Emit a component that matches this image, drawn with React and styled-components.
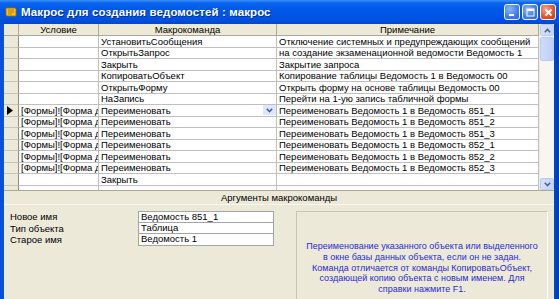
import React from "react";
import styled, { createGlobalStyle } from "styled-components";

const GlobalStyle = createGlobalStyle`
  html, body {
    margin: 0;
    padding: 0;
    overflow: hidden;
    background: #ece9d8;
  }
  body {
    font-family: "Liberation Sans", Arial, sans-serif;
  }
`;

const COND = "[Формы]![Форма д";

const rows = [
  { cond: "", action: "УстановитьСообщения", note: "Отключение системных и предупреждающих сообщений" },
  { cond: "", action: "ОткрытьЗапрос", note: "на создание экзаменационной ведомости Ведомость 1" },
  { cond: "", action: "Закрыть", note: "Закрытие запроса" },
  { cond: "", action: "КопироватьОбъект", note: "Копирование таблицы Ведомость 1 в Ведомость 00" },
  { cond: "", action: "ОткрытьФорму", note: "Открыть форму на основе таблицы Ведомость 00" },
  { cond: "", action: "НаЗапись", note: "Перейти на 1-ую запись табличной формы" },
  { cond: COND, action: "Переименовать", note: "Переименовать Ведомость 1 в Ведомость 851_1", current: true },
  { cond: COND, action: "Переименовать", note: "Переименовать Ведомость 1 в Ведомость 851_2" },
  { cond: COND, action: "Переименовать", note: "Переименовать Ведомость 1 в Ведомость 851_3" },
  { cond: COND, action: "Переименовать", note: "Переименовать Ведомость 1 в Ведомость 852_1" },
  { cond: COND, action: "Переименовать", note: "Переименовать Ведомость 1 в Ведомость 852_2" },
  { cond: COND, action: "Переименовать", note: "Переименовать Ведомость 1 в Ведомость 852_3" },
  { cond: "", action: "Закрыть", note: "" },
  { cond: "", action: "", note: "" },
];

const args = [
  { label: "Новое имя", value: "Ведомость 851_1" },
  { label: "Тип объекта", value: "Таблица" },
  { label: "Старое имя", value: "Ведомость 1" },
];

const helpLines = [
  "Переименование указанного объекта или выделенного",
  "в окне базы данных объекта, если он не задан.",
  "Команда отличается от команды КопироватьОбъект,",
  "создающей копию объекта с новым именем. Для",
  "справки нажмите F1.",
];

const Window = styled.div`
  width: 559px;
  height: 299px;
  display: flex;
  flex-direction: column;
  background: linear-gradient(90deg, #0a4fd6, #0058e6 2%, #0058e6 98%, #003cb0);
  overflow: hidden;
`;

const TitleBar = styled.div`
  height: 24px;
  flex: none;
  display: flex;
  align-items: center;
  padding: 0 3px 0 5px;
  background: linear-gradient(
    #3d8ef5 0%,
    #0a66f0 12%,
    #0058e6 40%,
    #0054e3 75%,
    #0048d0 100%
  );
`;

const Title = styled.div`
  margin-left: 4px;
  color: #fff;
  font-size: 11.5px;
  font-weight: bold;
  letter-spacing: 0.1px;
  text-shadow: 1px 1px 0 #0a2a8c;
  white-space: nowrap;
`;

const Buttons = styled.div`
  margin-left: auto;
  display: flex;
  gap: 2px;
`;

const WinButton = styled.div`
  width: 16px;
  height: 16px;
  box-sizing: border-box;
  border: 1px solid #fff;
  border-radius: 3px;
  display: flex;
  align-items: center;
  justify-content: center;
  background: ${({ close }) =>
    close
      ? "radial-gradient(circle at 35% 30%, #f4a58a, #e2522a 60%, #c43a14)"
      : "radial-gradient(circle at 35% 30%, #8fb4fa, #3d7cf0 60%, #2a62dc)"};
`;

const Frame = styled.div`
  flex: 1;
  display: flex;
  flex-direction: column;
  margin: 0 5px 0 4px;
  background: #ece9d8;
  min-height: 0;
`;

const GridArea = styled.div`
  height: 166px;
  flex: none;
  display: flex;
  background: #fff;
  border-bottom: 1px solid #aca899;
`;

const Table = styled.div`
  flex: 1;
  overflow: hidden;
`;

const Row = styled.div`
  display: grid;
  grid-template-columns: 15px 80px 178px 1fr;
  height: ${({ head }) => (head ? "12px" : "11.5px")};
  font-size: 9.5px;
  line-height: ${({ head }) => (head ? "11px" : "10px")};
  color: #000;
`;

const Selector = styled.div`
  background: #ece9d8;
  border-right: 1px solid #8c8c8c;
  border-bottom: 1px solid #c8c5b8;
  box-sizing: border-box;
  display: flex;
  align-items: center;
  padding-left: 3px;
`;

const HeadCell = styled.div`
  background: #ece9d8;
  border-right: 1px solid #aca899;
  border-bottom: 1px solid #aca899;
  box-sizing: border-box;
  text-align: center;
  overflow: hidden;
  white-space: nowrap;
`;

const Cell = styled.div`
  position: relative;
  border-right: 1px solid #c0c0c0;
  border-bottom: 1px solid #c0c0c0;
  box-sizing: border-box;
  padding: 0.5px 0 0 2px;
  overflow: hidden;
  white-space: nowrap;
`;

const ComboButton = styled.div`
  position: absolute;
  right: 0;
  top: 0;
  width: 13px;
  height: 10px;
  display: flex;
  align-items: center;
  justify-content: center;
  background: #dfe8fb;
`;

const Scrollbar = styled.div`
  width: 14px;
  flex: none;
  display: flex;
  flex-direction: column;
  background: #f7f6f0;
  border-left: 1px solid #eeede5;
`;

const ScrollButton = styled.div`
  height: 12px;
  flex: none;
  box-sizing: border-box;
  border: 1px solid #b8cbf5;
  border-radius: 2px;
  background: linear-gradient(90deg, #d5e1fb, #c2d4f8);
  display: flex;
  align-items: center;
  justify-content: center;
`;

const Track = styled.div`
  flex: 1;
  padding-top: 1px;
`;

const Thumb = styled.div`
  height: 24px;
  box-sizing: border-box;
  border: 1px solid #b8cbf5;
  border-radius: 2px;
  background: linear-gradient(90deg, #cfdcfb, #bccffa);
`;

const ArgsBar = styled.div`
  height: 13px;
  flex: none;
  text-align: center;
  font-size: 9.5px;
  line-height: 13px;
  color: #000;
  border-bottom: 1px solid #f8f7f0;
`;

const ArgsBody = styled.div`
  flex: 1;
  display: flex;
  padding-top: 6px;
`;

const ArgsList = styled.div`
  width: 286px;
  flex: none;
  display: grid;
  grid-template-columns: 128px 136px;
  grid-auto-rows: 11.7px;
  align-content: start;
  padding-left: 6px;
`;

const ArgLabel = styled.div`
  font-size: 9.5px;
  line-height: 11px;
  color: #000;
`;

const ArgValue = styled.div`
  background: #fff;
  border: 1px solid #a5a5a5;
  border-top-width: ${({ first }) => (first ? "1px" : "0")};
  box-sizing: border-box;
  font-size: 9.5px;
  line-height: 10px;
  padding-left: 2px;
  color: #000;
  white-space: nowrap;
  overflow: hidden;
`;

const HelpBox = styled.div`
  width: 252px;
  height: 114px;
  flex: none;
  box-sizing: border-box;
  border: 1px solid #fff;
  border-top-color: #c8c5b4;
  border-left-color: #c8c5b4;
  display: flex;
  flex-direction: column;
  align-items: center;
  justify-content: center;
  text-align: center;
  font-size: 9px;
  line-height: 10.7px;
  color: #2b2bd6;
`;

const HelpLine = styled.div`
  white-space: nowrap;
`;

function MacroIcon() {
  return (
    <svg width="12" height="12" viewBox="0 0 12 12">
      <path d="M1 2h9l1 1v7H2L1 9z" fill="#f5c21a" stroke="#a86a00" strokeWidth="0.8" />
      <path d="M3 4h6M3 6h6M3 8h4" stroke="#b36b00" strokeWidth="0.8" />
    </svg>
  );
}

function Chevron({ up, color = "#4d6185" }) {
  return (
    <svg width="7" height="5" viewBox="0 0 7 5">
      <path
        d={up ? "M0.8 4.2L3.5 1.4L6.2 4.2" : "M0.8 0.8L3.5 3.6L6.2 0.8"}
        fill="none"
        stroke={color}
        strokeWidth="1.5"
      />
    </svg>
  );
}

export default function App() {
  return (
    <>
      <GlobalStyle />
      <Window>
        <TitleBar>
          <MacroIcon />
          <Title>Макрос для создания ведомостей : макрос</Title>
          <Buttons>
            <WinButton>
              <svg width="9" height="9" viewBox="0 0 9 9">
                <rect x="1" y="6" width="5" height="2" fill="#fff" />
              </svg>
            </WinButton>
            <WinButton>
              <svg width="9" height="9" viewBox="0 0 9 9">
                <rect x="1" y="1" width="7" height="7" fill="none" stroke="#fff" strokeWidth="1" />
                <rect x="1" y="1" width="7" height="2" fill="#fff" />
              </svg>
            </WinButton>
            <WinButton close>
              <svg width="9" height="9" viewBox="0 0 9 9">
                <path d="M1.5 1.5L7.5 7.5M7.5 1.5L1.5 7.5" stroke="#fff" strokeWidth="1.8" />
              </svg>
            </WinButton>
          </Buttons>
        </TitleBar>
        <Frame>
          <GridArea>
            <Table>
              <Row head>
                <HeadCell />
                <HeadCell>Условие</HeadCell>
                <HeadCell>Макрокоманда</HeadCell>
                <HeadCell>Примечание</HeadCell>
              </Row>
              {rows.map((r, i) => (
                <Row key={i}>
                  <Selector>
                    {r.current && (
                      <svg width="6" height="9" viewBox="0 0 6 9">
                        <path d="M0 0L6 4.5L0 9z" fill="#000" />
                      </svg>
                    )}
                  </Selector>
                  <Cell>{r.cond}</Cell>
                  <Cell>
                    {r.action}
                    {r.current && (
                      <ComboButton>
                        <Chevron color="#3a5db5" />
                      </ComboButton>
                    )}
                  </Cell>
                  <Cell>{r.note}</Cell>
                </Row>
              ))}
            </Table>
            <Scrollbar>
              <ScrollButton>
                <Chevron up />
              </ScrollButton>
              <Track>
                <Thumb />
              </Track>
              <ScrollButton>
                <Chevron />
              </ScrollButton>
            </Scrollbar>
          </GridArea>
          <ArgsBar>Аргументы макрокоманды</ArgsBar>
          <ArgsBody>
            <ArgsList>
              {args.map((a, i) => (
                <React.Fragment key={a.label}>
                  <ArgLabel>{a.label}</ArgLabel>
                  <ArgValue first={i === 0}>{a.value}</ArgValue>
                </React.Fragment>
              ))}
            </ArgsList>
            <HelpBox>
              {helpLines.map((l) => (
                <HelpLine key={l}>{l}</HelpLine>
              ))}
            </HelpBox>
          </ArgsBody>
        </Frame>
      </Window>
    </>
  );
}
